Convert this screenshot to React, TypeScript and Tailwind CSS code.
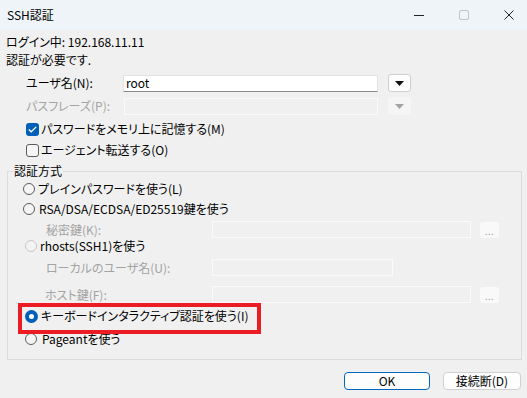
import React from "react";

function Radio({ checked, disabled }: { checked?: boolean; disabled?: boolean }) {
  if (checked) {
    return (
      <div className="w-[13px] h-[13px] rounded-full bg-[#005fb8] flex items-center justify-center shrink-0">
        <div className="w-[5px] h-[5px] rounded-full bg-white" />
      </div>
    );
  }
  return (
    <div
      className={
        disabled
          ? "w-[12px] h-[12px] rounded-full border border-[#c8c8c8] bg-[#f3f3f3] shrink-0"
          : "w-[12px] h-[12px] rounded-full border border-[#5c5c5c] bg-[#f5f5f5] shrink-0"
      }
    />
  );
}

function DropBtn({ disabled }: { disabled?: boolean }) {
  return (
    <div
      className={
        disabled
          ? "w-[23px] h-[18px] rounded-[3px] bg-[#f5f5f5] flex items-center justify-center"
          : "w-[23px] h-[18px] rounded-[3px] border border-[#cfcfcf] bg-[#fdfdfd] flex items-center justify-center"
      }
    >
      <svg width="9" height="5" viewBox="0 0 9 5">
        <path d="M0 0 H9 L4.5 5 Z" fill={disabled ? "#a3a3a3" : "#111"} />
      </svg>
    </div>
  );
}

function DotsBtn() {
  return (
    <div className="w-[19px] h-[16px] rounded-[3px] bg-[#f9f9f9] flex items-end justify-center pb-[3px] ml-[9px]">
      <span className="text-[9px] leading-[6px] text-[#9a9a9a] tracking-[0.5px]">...</span>
    </div>
  );
}

export default function App() {
  return (
    <div className="w-[527px] h-[398px] bg-[#f0f0f0] text-[12px] leading-[18px] text-black font-['Noto_Sans_CJK_JP',sans-serif] [font-feature-settings:'palt'] overflow-hidden">
      {/* Title bar */}
      <div className="h-[30px] bg-[#eff4f9] flex items-center justify-between pl-[7px] pr-[13px]">
        <span className="text-[12px]">SSH認証</span>
        <div className="flex items-center gap-[35px]">
          <div className="w-[10px] h-[10px] flex items-center">
            <div className="w-[10px] h-[1px] bg-[#222]" />
          </div>
          <div className="w-[10px] h-[10px] rounded-[2px] border border-[#c3c3c3]" />
          <svg width="10" height="10" viewBox="0 0 10 10">
            <path d="M0.5 0.5 L9.5 9.5 M9.5 0.5 L0.5 9.5" stroke="#222" strokeWidth="1" />
          </svg>
        </div>
      </div>

      {/* Body */}
      <div className="flex flex-col pt-[3px]">
        <div className="h-[18px] pl-[6px] flex items-center">ログイン中: 192.168.11.11</div>
        <div className="h-[18px] pl-[6px] flex items-center">認証が必要です.</div>

        <div className="h-[18px] mt-[5px] pl-[26px] flex items-center">
          <span className="w-[97px]">ユーザ名(N):</span>
          <div className="w-[255px] h-[17px] bg-white border border-[#e3e3e3] border-b-[#8a8a8a] flex items-center pl-[2px] leading-[14px]">
            root
          </div>
          <div className="ml-[10px]">
            <DropBtn />
          </div>
        </div>

        <div className="h-[18px] mt-[5px] pl-[26px] flex items-center text-[#a3a3a3]">
          <span className="w-[98px]">パスフレーズ(P):</span>
          <div className="w-[254px] h-[17px] border border-[#fafafa]" />
          <div className="ml-[10px]">
            <DropBtn disabled />
          </div>
        </div>

        <div className="h-[18px] mt-[5px] pl-[26px] flex items-center">
          <div className="w-[13px] h-[13px] rounded-[3px] bg-[#005fb8] flex items-center justify-center">
            <svg width="9" height="7" viewBox="0 0 9 7">
              <path d="M0.8 3.6 L3.2 5.8 L8.2 0.9" stroke="white" strokeWidth="1.3" fill="none" />
            </svg>
          </div>
          <span className="ml-[2px]">パスワードをメモリ上に記憶する(M)</span>
        </div>

        <div className="h-[18px] mt-[3px] pl-[26px] flex items-center">
          <div className="w-[13px] h-[13px] rounded-[3px] border border-[#5c5c5c] bg-[#f6f6f6]" />
          <span className="ml-[2px]">エージェント転送する(O)</span>
        </div>

        {/* Group box */}
        <div className="relative mt-[12px] ml-[7px] w-[515px] h-[189px] border border-[#dcdcdc] flex flex-col pt-[8px] pl-[15px]">
          <span className="absolute left-[5px] top-[-10px] px-[1px] bg-[#f0f0f0]">認証方式</span>

          <div className="h-[18px] flex items-center">
            <Radio />
            <span className="ml-[3px]">プレインパスワードを使う(L)</span>
          </div>
          <div className="h-[18px] mt-[2px] flex items-center">
            <Radio />
            <span className="ml-[4px]">RSA/DSA/ECDSA/ED25519鍵を使う</span>
          </div>
          <div className="h-[17px] mt-[3px] flex items-center text-[#a3a3a3]">
            <span className="w-[189px] pl-[23px]">秘密鍵(K):</span>
            <div className="w-[259px] h-[17px] border border-[#fafafa]" />
            <DotsBtn />
          </div>
          <div className="h-[16px] flex items-center text-[#a3a3a3] pl-[2px]">
            <Radio disabled />
            <span className="ml-[3px] text-black">rhosts(SSH1)を使う</span>
          </div>
          <div className="h-[17px] mt-[5px] flex items-center text-[#a3a3a3]">
            <span className="w-[189px] pl-[23px]">ローカルのユーザ名(U):</span>
            <div className="w-[181px] h-[17px] border border-[#fafafa]" />
          </div>
          <div className="h-[17px] mt-[10px] flex items-center text-[#a3a3a3]">
            <span className="w-[189px] pl-[22px]">ホスト鍵(F):</span>
            <div className="w-[259px] h-[17px] border border-[#fafafa]" />
            <DotsBtn />
          </div>
          <div className="h-[18px] mt-[4px] flex items-center pl-[2px]">
            <Radio checked />
            <span className="ml-[3px]">キーボードインタラクティブ認証を使う(I)</span>
          </div>
          <div className="h-[18px] mt-[5px] flex items-center pl-[2px]">
            <Radio />
            <span className="ml-[5px]">Pageantを使う</span>
          </div>

          <div className="absolute left-[10px] top-[131px] w-[243px] h-[31px] border-4 border-[#ec1c24]" />
        </div>

        {/* Buttons */}
        <div className="mt-[12px] flex justify-end pr-[6px] gap-[13px]">
          <div className="w-[86px] h-[18px] rounded-[4px] border border-[#0067c0] bg-[#fdfdfd] flex items-center justify-center leading-[14px]">
            OK
          </div>
          <div className="w-[78px] h-[18px] rounded-[4px] border border-[#d0d0d0] bg-[#fdfdfd] flex items-center justify-center leading-[14px]">
            接続断(D)
          </div>
        </div>
      </div>
    </div>
  );
}
